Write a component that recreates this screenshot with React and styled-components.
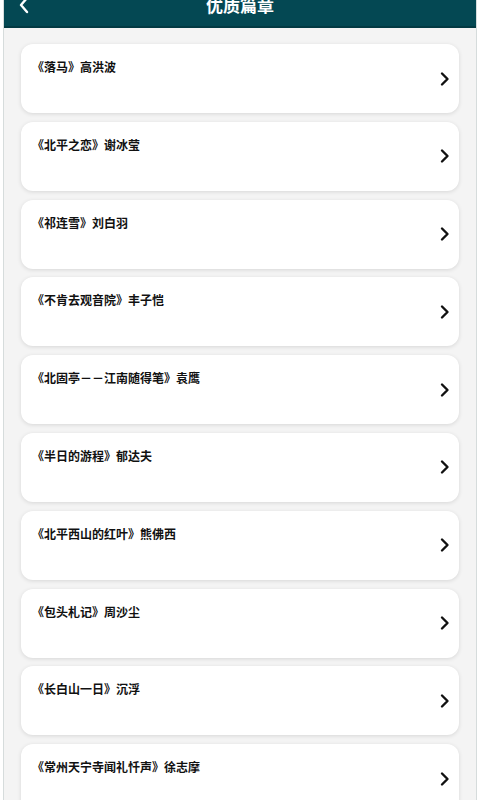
import React from "react";
import styled, { createGlobalStyle } from "styled-components";

const Global = createGlobalStyle`
  html, body { margin: 0; padding: 0; background: #ffffff; }
  body { font-family: "Noto Sans CJK SC", "Noto Sans", sans-serif; }
`;

const Frame = styled.div`
  margin: 0 3px;
  border-left: 1px solid #d6dcdc;
  border-right: 1px solid #d6dcdc;
  background: #f4f4f4;
  height: 800px;
  overflow: hidden;
`;

const Shift = styled.div`
  margin-top: -16px;
`;

const Header = styled.header`
  height: 44px;
  background: #044853;
  border-bottom: 2px solid #033a43;
  box-sizing: border-box;
  display: flex;
  align-items: center;
  justify-content: center;
  position: relative;
`;

const Back = styled.span`
  position: absolute;
  left: 14px;
  top: 12px;
  display: flex;
`;

const Title = styled.h1`
  margin: 0;
  color: #ffffff;
  font-size: 17px;
  font-weight: 700;
  line-height: 20px;
`;

const List = styled.div`
  display: flex;
  flex-direction: column;
  gap: 8.8px;
  padding: 16px 17px 0;
`;

const Card = styled.div`
  background: #ffffff;
  border-radius: 12px;
  box-shadow: 0 1px 4px rgba(0, 0, 0, 0.12);
  height: 69px;
  box-sizing: border-box;
  display: flex;
  align-items: center;
  padding: 0 8px 0 11px;
`;

const CardText = styled.div`
  flex: 1;
  align-self: flex-start;
  padding-top: 14px;
  font-size: 12px;
  font-weight: 700;
  color: #111;
  line-height: 18px;
`;

const Chevron = () => (
  <svg width="12" height="16" viewBox="0 0 12 16">
    <path d="M3 2.5 L8.5 8 L3 13.5" fill="none" stroke="#111" strokeWidth="2.4" strokeLinecap="round" strokeLinejoin="round" />
  </svg>
);

const items = [
  "《落马》高洪波",
  "《北平之恋》谢冰莹",
  "《祁连雪》刘白羽",
  "《不肯去观音院》丰子恺",
  "《北固亭－－江南随得笔》袁鹰",
  "《半日的游程》郁达夫",
  "《北平西山的红叶》熊佛西",
  "《包头札记》周沙尘",
  "《长白山一日》沉浮",
  "《常州天宁寺闻礼忏声》徐志摩",
];

export default function App() {
  return (
    <>
      <Global />
      <Frame>
        <Shift>
          <Header>
            <Back>
              <svg width="12" height="18" viewBox="0 0 12 18">
                <path d="M9 2 L3 9 L9 16" fill="none" stroke="#fff" strokeWidth="2.4" strokeLinecap="round" strokeLinejoin="round" />
              </svg>
            </Back>
            <Title>优质篇章</Title>
          </Header>
          <List>
            {items.map((t) => (
              <Card key={t}>
                <CardText>{t}</CardText>
                <Chevron />
              </Card>
            ))}
          </List>
        </Shift>
      </Frame>
    </>
  );
}
